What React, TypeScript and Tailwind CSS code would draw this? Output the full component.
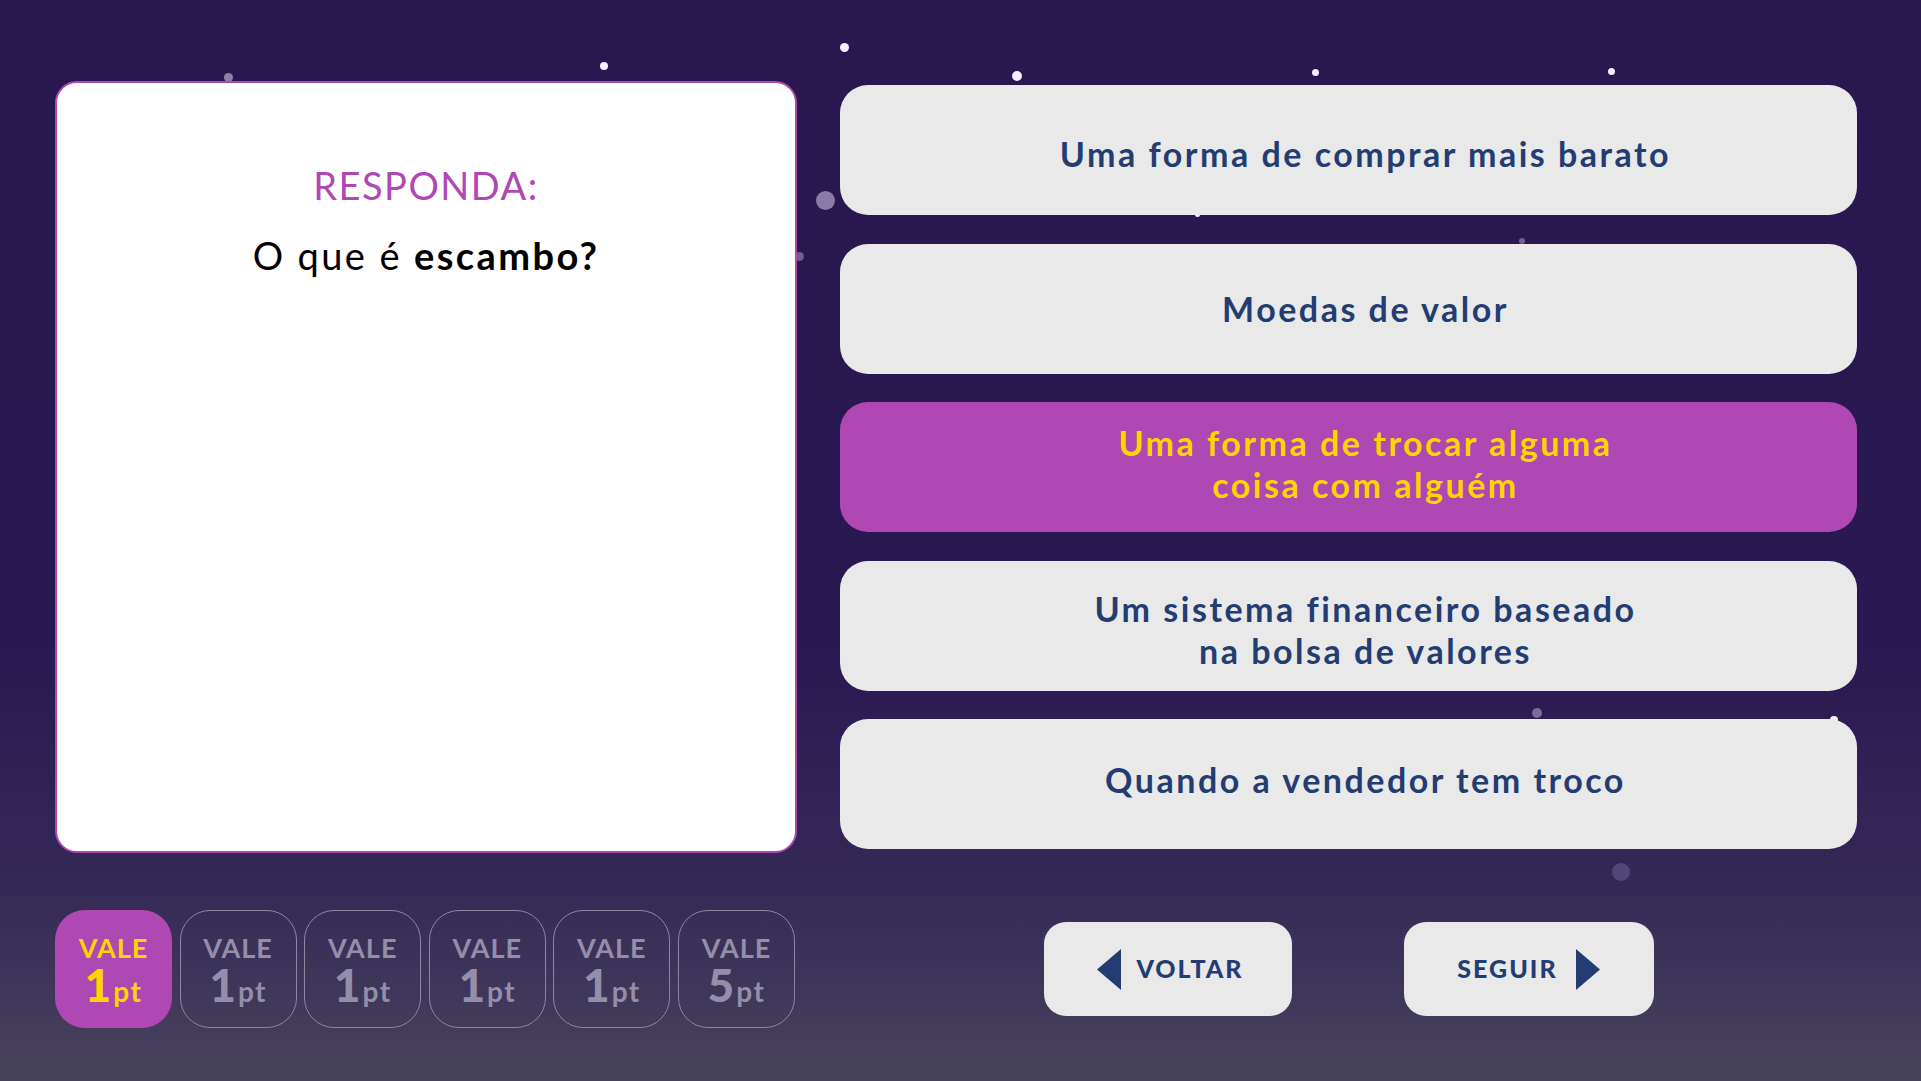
import React from "react";

const stars: { x: number; y: number; s: number; c: string }[] = [
  { x: 228, y: 77, s: 9, c: "#8b80a6" },
  { x: 604, y: 66, s: 8, c: "#f4f0ff" },
  { x: 844, y: 47, s: 9, c: "#f4f0ff" },
  { x: 1017, y: 76, s: 10, c: "#f4f0ff" },
  { x: 1315, y: 72, s: 7, c: "#f4f0ff" },
  { x: 1611, y: 71, s: 7, c: "#f4f0ff" },
  { x: 825, y: 200, s: 19, c: "#8a7ca8" },
  { x: 799, y: 256, s: 9, c: "#6d5f92" },
  { x: 1197, y: 214, s: 5, c: "#f4f0ff" },
  { x: 1522, y: 241, s: 6, c: "#6d5f92" },
  { x: 1537, y: 713, s: 10, c: "#7a6d9a" },
  { x: 1834, y: 720, s: 8, c: "#f4f0ff" },
  { x: 1621, y: 872, s: 18, c: "#51477a" },
];

const answers = [
  { lines: ["Uma forma de comprar mais barato"], active: false, shift: "pt-[8px]" },
  { lines: ["Moedas de valor"], active: false, shift: "pt-0" },
  { lines: ["Uma forma de trocar alguma", "coisa com alguém"], active: true, shift: "pb-[6px]" },
  { lines: ["Um sistema financeiro baseado", "na bolsa de valores"], active: false, shift: "pt-[8px]" },
  { lines: ["Quando a vendedor tem troco"], active: false, shift: "pb-[8px]" },
];

const badges = ["1", "1", "1", "1", "1", "5"];

export default function App() {
  return (
    <div
      className="relative w-full h-[1081px] overflow-hidden bg-[linear-gradient(to_bottom,#29174f_0%,#2a1852_60%,#352957_82%,#48435c_100%)]"
      style={{ fontFamily: "Lato, 'Open Sans', sans-serif" }}
    >
      {stars.map((st, i) => (
        <div
          key={i}
          className="absolute rounded-full"
          style={{
            left: st.x - st.s / 2,
            top: st.y - st.s / 2,
            width: st.s,
            height: st.s,
            background: st.c,
          }}
        />
      ))}

      <div className="relative z-10 flex gap-[43px] pl-[55px] pt-[81px]">
        {/* Left column */}
        <div className="flex flex-col w-[742px]">
          <div className="h-[772px] bg-white rounded-[22px] border-2 border-[#b048b3] flex flex-col items-center pt-[80px]">
            <div className="text-[38px] leading-[44px] text-[#b048b3] tracking-[1.5px] font-normal">
              RESPONDA:
            </div>
            <div className="mt-[26px] text-[38px] leading-[44px] text-black tracking-[2.4px]">
              O que é <span className="font-bold">escambo?</span>
            </div>
          </div>

          <div className="mt-[57px] flex gap-[7.6px]">
            {badges.map((n, i) => {
              const active = i === 0;
              return (
                <div
                  key={i}
                  className={
                    active
                      ? "w-[117px] h-[118px] rounded-[30px] bg-[#b048b3] flex flex-col items-center justify-center text-[#ffd500]"
                      : "w-[117px] h-[118px] rounded-[30px] border-[1.5px] border-[#8d87a0] flex flex-col items-center justify-center text-[#948ea9]"
                  }
                >
                  <div className="text-[27px] leading-[28px] font-bold tracking-[1px]">VALE</div>
                  <div className="flex items-baseline mt-[4px]">
                    <span className="inline-block text-[46px] leading-[38px] font-black">{n}</span>
                    <span className="inline-block text-[28px] leading-[28px] font-bold ml-[2px] tracking-[1.5px]">pt</span>
                  </div>
                </div>
              );
            })}
          </div>
        </div>

        {/* Right column */}
        <div className="flex flex-col w-[1017px]">
          <div className="flex flex-col gap-[28.5px] pt-[4px]">
            {answers.map((a, i) => (
              <div
                key={i}
                className={
                  (a.active
                    ? "h-[130px] rounded-[28px] bg-[#b048b3] flex flex-col items-center justify-center pl-[34px] text-[#ffd500] "
                    : "h-[130px] rounded-[28px] bg-[#e9e9e9] flex flex-col items-center justify-center pl-[34px] text-[#233d73] ") +
                  a.shift
                }
              >
                {a.lines.map((l, j) => (
                  <div key={j} className="text-[34px] leading-[42px] font-bold tracking-[2.5px]">
                    {l}
                  </div>
                ))}
              </div>
            ))}
          </div>

          <div className="mt-[73px] flex justify-center gap-[112px]">
            <button className="w-[248px] h-[94px] rounded-[22px] bg-[#e9e9e9] flex items-center justify-center gap-[15px] text-[#233d73] pl-[6px]">
              <svg width="24" height="41" viewBox="0 0 24 41">
                <polygon points="24,0 24,41 0,20.5" fill="#233d73" />
              </svg>
              <span className="text-[25px] font-black tracking-[2px]">VOLTAR</span>
            </button>
            <button className="w-[250px] h-[94px] rounded-[22px] bg-[#e9e9e9] flex items-center justify-center gap-[18px] text-[#233d73]">
              <span className="text-[25px] font-black tracking-[2px]">SEGUIR</span>
              <svg width="24" height="41" viewBox="0 0 24 41">
                <polygon points="0,0 0,41 24,20.5" fill="#233d73" />
              </svg>
            </button>
          </div>
        </div>
      </div>
    </div>
  );
}
